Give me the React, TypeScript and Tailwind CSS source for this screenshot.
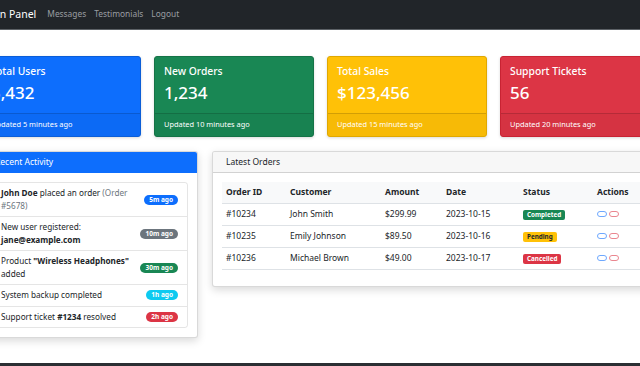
import React from "react";

const stats = [
  { title: "Total Users", value: "5,432", note: "Updated 5 minutes ago", bg: "bg-[#0d6efd]", border: "border-[#0b5ed7]" },
  { title: "New Orders", value: "1,234", note: "Updated 10 minutes ago", bg: "bg-[#198754]", border: "border-[#157347]" },
  { title: "Total Sales", value: "$123,456", note: "Updated 15 minutes ago", bg: "bg-[#ffc107]", border: "border-[#e0a800]" },
  { title: "Support Tickets", value: "56", note: "Updated 20 minutes ago", bg: "bg-[#dc3545]", border: "border-[#c82333]" },
];

const orders = [
  { id: "#10234", customer: "John Smith", amount: "$299.99", date: "2023-10-15", status: "Completed", badge: "bg-[#198754] text-white" },
  { id: "#10235", customer: "Emily Johnson", amount: "$89.50", date: "2023-10-16", status: "Pending", badge: "bg-[#ffc107] text-[#212529]" },
  { id: "#10236", customer: "Michael Brown", amount: "$49.00", date: "2023-10-17", status: "Cancelled", badge: "bg-[#dc3545] text-white" },
];

function Pill({ className, children }: { className: string; children: React.ReactNode }) {
  return (
    <span className={`shrink-0 rounded-full px-[5px] h-[10px] leading-[10px] text-[6.5px] font-bold text-white ${className}`}>
      {children}
    </span>
  );
}

export default function App() {
  return (
    <div className="w-[640px] h-[366px] overflow-hidden bg-white flex flex-col text-[#212529] font-['Noto_Sans','Open_Sans',sans-serif]">
      {/* navbar */}
      <nav className="h-[30px] shrink-0 bg-[#212529] border-b border-[#5c6166] flex items-center">
        <span className="-ml-[26px] text-[10.5px] text-white whitespace-nowrap">Admin Panel</span>
        <div className="ml-[11px] flex gap-[8px] text-[8.4px] text-[#9a9da1]">
          <span>Messages</span>
          <span>Testimonials</span>
          <span>Logout</span>
        </div>
      </nav>

      <main className="flex-1 -ml-[19px] w-[679px] pt-[26px] flex flex-col gap-[14px]">
        {/* stat cards */}
        <div className="grid grid-cols-4 gap-[13px]">
          {stats.map((s) => (
            <div key={s.title} className={`h-[81px] rounded-[3px] border ${s.border} ${s.bg} text-white shadow-[0_1px_3px_rgba(0,0,0,0.15)] flex flex-col overflow-hidden`}>
              <div className="flex-1 px-[9px] pt-[8px]">
                <div className="text-[10.3px] leading-[13px] font-medium whitespace-nowrap">{s.title}</div>
                <div className="mt-[4px] text-[17px] leading-[21px] font-medium whitespace-nowrap">{s.value}</div>
              </div>
              <div className="h-[23px] border-t border-black/15 bg-black/[0.03] px-[9px] flex items-center text-[7.4px] whitespace-nowrap">
                {s.note}
              </div>
            </div>
          ))}
        </div>

        {/* lower row */}
        <div className="flex gap-[14px] items-start">
          <div className="w-[217px] shrink-0 rounded-[3px] border border-black/15 bg-white shadow-[0_3px_8px_rgba(0,0,0,0.15)] overflow-hidden">
            <div className="h-[21px] bg-[#0d6efd] text-white text-[8.5px] px-[13px] flex items-center">Recent Activity</div>
            <div className="p-[9px]">
              <ul className="rounded-[3px] border border-black/10 text-[8.2px] leading-[12.5px]">
                <li className="flex items-center justify-between px-[9px] py-[4px]">
                  <div className="whitespace-nowrap">
                    <b>John Doe</b> placed an order <span className="text-[#6c757d]">(Order</span>
                    <br />
                    <span className="text-[#6c757d]">#5678)</span>
                  </div>
                  <Pill className="bg-[#0d6efd]">5m ago</Pill>
                </li>
                <li className="flex items-center justify-between px-[9px] py-[4px] border-t border-black/10">
                  <div className="whitespace-nowrap">
                    New user registered:
                    <br />
                    <b>jane@example.com</b>
                  </div>
                  <Pill className="bg-[#6c757d]">10m ago</Pill>
                </li>
                <li className="flex items-center justify-between px-[9px] py-[4px] border-t border-black/10">
                  <div className="whitespace-nowrap">
                    Product <b>"Wireless Headphones"</b>
                    <br />
                    added
                  </div>
                  <Pill className="bg-[#198754]">30m ago</Pill>
                </li>
                <li className="flex items-center justify-between px-[9px] py-[4px] border-t border-black/10">
                  <div className="whitespace-nowrap">System backup completed</div>
                  <Pill className="bg-[#0dcaf0]">1h ago</Pill>
                </li>
                <li className="flex items-center justify-between px-[9px] py-[4px] border-t border-black/10">
                  <div className="whitespace-nowrap">
                    Support ticket <b>#1234</b> resolved
                  </div>
                  <Pill className="bg-[#dc3545]">2h ago</Pill>
                </li>
              </ul>
            </div>
          </div>

          <div className="flex-1 rounded-[3px] border border-black/15 bg-white shadow-[0_3px_8px_rgba(0,0,0,0.15)] overflow-hidden">
            <div className="h-[21px] bg-[#f7f7f7] border-b border-black/15 text-[8.5px] px-[13px] flex items-center">Latest Orders</div>
            <div className="px-[9px] pt-[9px] pb-[16px]">
              <table className="w-full text-[8.5px] border-collapse">
                <thead>
                  <tr className="bg-[#f8f9fa] h-[21px] border-b border-[#dee2e6] font-bold text-left">
                    <th className="px-[4px] w-[64px]">Order ID</th>
                    <th className="px-[4px] w-[95px]">Customer</th>
                    <th className="px-[4px] w-[61px]">Amount</th>
                    <th className="px-[4px] w-[77px]">Date</th>
                    <th className="px-[4px] w-[74px]">Status</th>
                    <th className="px-[4px]">Actions</th>
                  </tr>
                </thead>
                <tbody>
                  {orders.map((o) => (
                    <tr key={o.id} className="h-[22px] border-b border-[#dee2e6]">
                      <td className="px-[4px]">{o.id}</td>
                      <td className="px-[4px]">{o.customer}</td>
                      <td className="px-[4px]">{o.amount}</td>
                      <td className="px-[4px]">{o.date}</td>
                      <td className="px-[4px]">
                        <span className={`inline-block rounded-[2px] px-[4px] h-[10px] leading-[10px] text-[6.3px] font-bold ${o.badge}`}>
                          {o.status}
                        </span>
                      </td>
                      <td className="px-[4px]">
                        <div className="flex gap-[2px]">
                          <span className="w-[10px] h-[6px] rounded-full border border-[#6ea8fe]" />
                          <span className="w-[10px] h-[6px] rounded-full border border-[#ea868f]" />
                        </div>
                      </td>
                    </tr>
                  ))}
                </tbody>
              </table>
            </div>
          </div>
        </div>
      </main>

      <footer className="h-[3px] shrink-0 bg-[#2b2f33]" />
    </div>
  );
}
